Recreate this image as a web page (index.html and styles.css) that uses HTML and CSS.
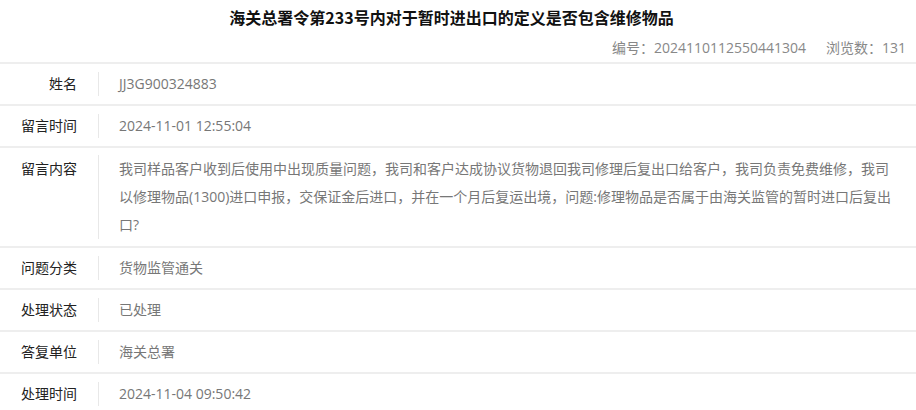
FILE: index.html
```html
<!DOCTYPE html>
<html lang="zh-CN">
<head>
<meta charset="utf-8">
<title>留言详情</title>
<link rel="stylesheet" href="styles.css">
</head>
<body>
<div class="page">
  <div class="head">
    <h1 class="title">海关总署令第233号内对于暂时进出口的定义是否包含维修物品</h1>
    <div class="meta"><span>编号：2024110112550441304</span><span>浏览数：131</span></div>
  </div>
  <div class="row"><div class="label">姓名</div><div class="value">JJ3G900324883</div></div>
  <div class="row"><div class="label">留言时间</div><div class="value">2024-11-01 12:55:04</div></div>
  <div class="row row-long"><div class="label">留言内容</div><div class="value">我司样品客户收到后使用中出现质量问题，我司和客户达成协议货物退回我司修理后复出口给客户，我司负责免费维修，我司以修理物品(1300)进口申报，交保证金后进口，并在一个月后复运出境，问题:修理物品是否属于由海关监管的暂时进口后复出口?</div></div>
  <div class="row"><div class="label">问题分类</div><div class="value">货物监管通关</div></div>
  <div class="row"><div class="label">处理状态</div><div class="value">已处理</div></div>
  <div class="row"><div class="label">答复单位</div><div class="value">海关总署</div></div>
  <div class="row"><div class="label">处理时间</div><div class="value">2024-11-04 09:50:42</div></div>
</div>
</body>
</html>
```
FILE: styles.css
```css
html, body {
  margin: 0;
  padding: 0;
  background: #fff;
}
body {
  font-family: "Open Sans", "Noto Sans CJK SC", sans-serif;
  font-size: 14px;
  color: #333;
}
.head {
  display: flex;
  flex-direction: column;
}
.title {
  margin: 0;
  font-size: 16px;
  font-weight: bold;
  line-height: 34px;
  color: #111;
  text-align: center;
  padding-right: 13px;
  font-family: "Noto Sans CJK SC", sans-serif;
}
.meta {
  display: flex;
  justify-content: flex-end;
  gap: 20px;
  line-height: 28px;
  padding-right: 10px;
  color: #888;
}
.row {
  display: flex;
  border-top: 2px solid #eeeeee;
  padding: 8px 0;
  line-height: 24px;
}
.row-long {
  padding: 7px 0;
  line-height: 28px;
}
.label {
  flex: 0 0 77px;
  padding-right: 21px;
  text-align: right;
  border-right: 1px solid #e8e8e8;
  color: #222;
}
.value {
  flex: 1;
  padding: 0 20px;
  color: #777;
}
```
